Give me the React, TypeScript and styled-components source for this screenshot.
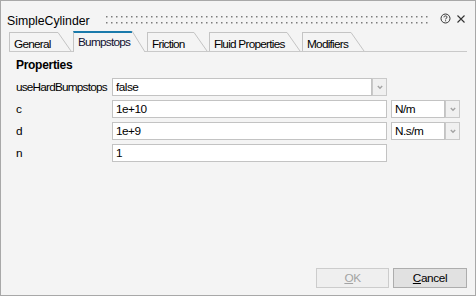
import React from "react";
import styled, { createGlobalStyle } from "styled-components";

const Global = createGlobalStyle`
  html, body { margin: 0; padding: 0; background: #f4f4f4; }
  body { font-family: "Liberation Sans", Arial, sans-serif; }
  * { box-sizing: border-box; }
`;

const Window = styled.div`
  width: 476px;
  height: 296px;
  border: 1px solid #a8a8a8;
  background: #f4f4f4;
  display: flex;
  flex-direction: column;
  color: #000;
  font-family: "Liberation Sans", Arial, sans-serif;
  font-size: 11.5px;
`;

const TitleBar = styled.div`
  display: flex;
  align-items: flex-start;
  height: 16px;
  margin-top: 12px;
  padding: 0 10px 0 6px;
`;

const Title = styled.div`
  font-size: 12.3px;
  line-height: 16px;
  white-space: nowrap;
`;

const Grip = styled.svg`
  flex: 1;
  height: 8px;
  margin: 3px 10px 0 16px;
  display: block;
`;

const IconButton = styled.svg<{ $mt: number; $ml: number }>`
  display: block;
  margin-top: ${(p) => p.$mt}px;
  margin-left: ${(p) => p.$ml}px;
`;

const TabStrip = styled.div`
  display: flex;
  align-items: flex-end;
  height: 23px;
  margin: 0 8px;
  border-bottom: 1px solid #c9c9c9;
`;

const TabItem = styled.div<{ $active?: boolean }>`
  display: flex;
  align-items: stretch;
  height: ${(p) => (p.$active ? 21 : 19)}px;
  margin-right: 2px;
  margin-bottom: ${(p) => (p.$active ? -1 : 0)}px;
  position: relative;
`;

const TabLabel = styled.div<{ $w: number; $active?: boolean }>`
  width: ${(p) => p.$w}px;
  border-left: 1px solid #c4c4c4;
  border-top: ${(p) => (p.$active ? "2px solid #1a7aab" : "1px solid #c4c4c4")};
  background: ${(p) => (p.$active ? "#f4f4f4" : "transparent")};
  padding: ${(p) => (p.$active ? "1px 0 0 4px" : "3px 0 0 4px")};
  line-height: 16px;
  font-size: 11.8px;
  letter-spacing: -0.75px;
  white-space: nowrap;
  color: ${(p) => (p.$active ? "#101030" : "#000")};
`;

const Slant = styled.svg`
  display: block;
  width: 13px;
  height: 100%;
  overflow: visible;
`;

const Body = styled.div`
  flex: 1;
  padding: 5px 0 0 15px;
  display: flex;
  flex-direction: column;
`;

const SectionTitle = styled.div`
  font-weight: bold;
  font-size: 12px;
  line-height: 16px;
  letter-spacing: -0.3px;
  margin-bottom: 5px;
`;

const Rows = styled.div`
  display: grid;
  grid-template-columns: 96px auto;
  row-gap: 4px;
  align-items: center;
`;

const Label = styled.div`
  font-size: 11.8px;
  line-height: 18px;
  letter-spacing: -0.8px;
  white-space: nowrap;
`;

const Field = styled.div`
  display: flex;
  align-items: stretch;
  height: 18px;
`;

const TextBox = styled.div<{ $w: number }>`
  width: ${(p) => p.$w}px;
  height: 18px;
  border: 1px solid #c3c3c3;
  background: #fff;
  padding-left: 3px;
  font-size: 11.8px;
  letter-spacing: -0.5px;
  line-height: 16px;
  white-space: nowrap;
  overflow: hidden;
`;

const DropButton = styled.div`
  width: 15px;
  height: 18px;
  border: 1px solid #c9c9c9;
  background: #f0f0f0;
  display: flex;
  align-items: center;
  justify-content: center;
`;

const UnitGroup = styled.div`
  display: flex;
  margin-left: 4px;
`;

const Footer = styled.div`
  display: flex;
  justify-content: flex-end;
  gap: 4px;
  padding: 0 8px 7px 0;
`;

const Button = styled.div<{ $w: number; $disabled?: boolean }>`
  width: ${(p) => p.$w}px;
  height: 20px;
  border: 1px solid ${(p) => (p.$disabled ? "#cccccc" : "#adadad")};
  background: ${(p) => (p.$disabled ? "#efefef" : "#e1e1e1")};
  color: ${(p) => (p.$disabled ? "#a3a3a3" : "#000")};
  font-size: 11.8px;
  letter-spacing: -0.4px;
  line-height: 18px;
  text-align: center;
  u { text-decoration: underline; text-underline-offset: 1px; }
`;

const Chevron = () => (
  <svg width="6" height="5" viewBox="0 0 6 5">
    <path d="M0.8 1 L3 3.2 L5.2 1" fill="none" stroke="#a3a3a3" strokeWidth="1.4" />
  </svg>
);

const tabs = [
  { name: "General", w: 49 },
  { name: "Bumpstops", w: 59, active: true },
  { name: "Friction", w: 47 },
  { name: "Fluid Properties", w: 78 },
  { name: "Modifiers", w: 49 },
];

export default function App() {
  return (
    <>
      <Global />
      <Window>
        <TitleBar>
          <Title>SimpleCylinder</Title>
          <Grip>
            <defs>
              <pattern id="grip" width="5" height="6" patternUnits="userSpaceOnUse">
                <rect x="0" y="0" width="1.5" height="1.5" fill="#7c7c7c" />
              </pattern>
            </defs>
            <rect x="0" y="0" width="100%" height="8" fill="url(#grip)" />
          </Grip>
          <IconButton $mt={0} $ml={0} width="11" height="11" viewBox="0 0 11 11">
            <circle cx="5.5" cy="5.5" r="4.5" fill="none" stroke="#333" strokeWidth="1" />
            <path d="M4 4.3 C4 3.3 4.7 2.9 5.5 2.9 C6.4 2.9 7 3.4 7 4.2 C7 5.1 5.6 5.2 5.6 6.4" fill="none" stroke="#333" strokeWidth="1" />
            <rect x="5.1" y="7.3" width="1" height="1" fill="#333" />
          </IconButton>
          <IconButton $mt={2} $ml={6} width="8" height="8" viewBox="0 0 8 8">
            <path d="M0.5 0.5 L7.5 7.5 M7.5 0.5 L0.5 7.5" stroke="#333" strokeWidth="1.1" />
          </IconButton>
        </TitleBar>
        <TabStrip>
          {tabs.map((t) => (
            <TabItem key={t.name} $active={t.active}>
              <TabLabel $w={t.w} $active={t.active}>
                {t.name}
              </TabLabel>
              <Slant viewBox="0 0 13 20" preserveAspectRatio="none">
                {t.active && <polygon points="0,0 13,20 0,20" fill="#f4f4f4" />}
                <line
                  x1="0"
                  y1={t.active ? 0 : 0.5}
                  x2="13"
                  y2="20"
                  stroke="#c4c4c4"
                  strokeWidth="1"
                  vectorEffect="non-scaling-stroke"
                />
              </Slant>
            </TabItem>
          ))}
        </TabStrip>
        <Body>
          <SectionTitle>Properties</SectionTitle>
          <Rows>
            <Label>useHardBumpstops</Label>
            <Field>
              <TextBox $w={260}>false</TextBox>
              <DropButton>
                <Chevron />
              </DropButton>
            </Field>
            <Label>c</Label>
            <Field>
              <TextBox $w={275}>1e+10</TextBox>
              <UnitGroup>
                <TextBox $w={54}>N/m</TextBox>
                <DropButton>
                  <Chevron />
                </DropButton>
              </UnitGroup>
            </Field>
            <Label>d</Label>
            <Field>
              <TextBox $w={275}>1e+9</TextBox>
              <UnitGroup>
                <TextBox $w={54}>N.s/m</TextBox>
                <DropButton>
                  <Chevron />
                </DropButton>
              </UnitGroup>
            </Field>
            <Label>n</Label>
            <Field>
              <TextBox $w={275}>1</TextBox>
            </Field>
          </Rows>
        </Body>
        <Footer>
          <Button $w={73} $disabled>
            <u>O</u>K
          </Button>
          <Button $w={74}>
            <u>C</u>ancel
          </Button>
        </Footer>
      </Window>
    </>
  );
}
